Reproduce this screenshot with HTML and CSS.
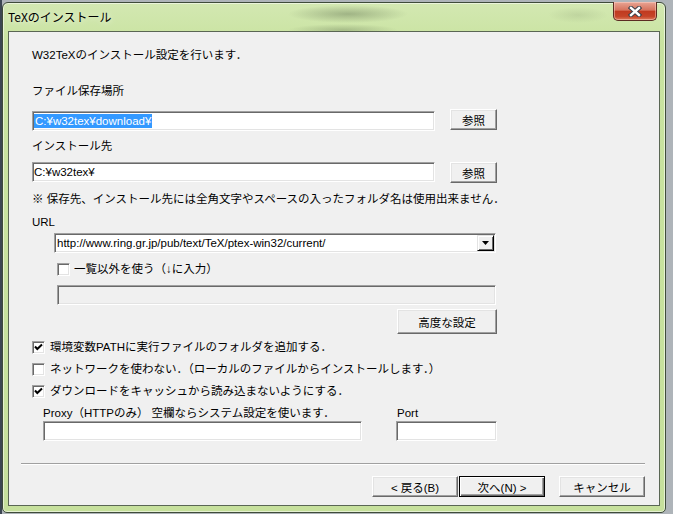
FILE: index.html
```html
<!DOCTYPE html>
<html lang="ja">
<head>
  <meta charset="UTF-8">
  <title>TeXのインストール</title>
  <link rel="stylesheet" href="styles.css">
</head>
<body>
  <div class="window">
    <div class="titlebar">
      <span class="title">TeXのインストール</span>
      <div class="close-btn">
        <svg width="14" height="11" viewBox="0 0 14 11">
          <path d="M3 2 L11 9 M11 2 L3 9" stroke="#3a3f48" stroke-width="4.4" stroke-linecap="square" fill="none"/>
          <path d="M3 2 L11 9 M11 2 L3 9" stroke="#fff" stroke-width="2.4" stroke-linecap="square" fill="none"/>
        </svg>
      </div>
    </div>

    <div class="client">
      <p class="intro">W32TeXのインストール設定を行います．</p>

      <p class="label lbl-save">ファイル保存場所</p>
      <div class="path-row row-save">
        <div class="edit path-edit"><span class="sel">C:¥w32tex¥download¥</span></div>
        <button class="btn browse-btn">参照</button>
      </div>

      <p class="label lbl-install">インストール先</p>
      <div class="path-row row-install">
        <div class="edit path-edit">C:¥w32tex¥</div>
        <button class="btn browse-btn">参照</button>
      </div>

      <p class="note">※ 保存先、インストール先には全角文字やスペースの入ったフォルダ名は使用出来ません．</p>

      <p class="label lbl-url">URL</p>
      <div class="combo">
        <span class="combo-text">http://www.ring.gr.jp/pub/text/TeX/ptex-win32/current/</span>
        <span class="combo-btn">
          <svg width="7" height="4" viewBox="0 0 7 4"><polygon points="0,0 7,0 3.5,4" fill="#000"/></svg>
        </span>
      </div>

      <label class="check check-custom"><span class="box"></span>一覧以外を使う（↓に入力）</label>
      <div class="edit disabled custom-url"></div>

      <div class="adv-row"><button class="btn adv-btn">高度な設定</button></div>

      <div class="options">
        <label class="check">
          <span class="box"><svg width="11" height="11" viewBox="0 0 11 11"><polyline points="2,4.5 4.3,7 9,2.5" stroke="#000" stroke-width="2" fill="none"/></svg></span>環境変数PATHに実行ファイルのフォルダを追加する．
        </label>
        <label class="check">
          <span class="box"></span>ネットワークを使わない．（ローカルのファイルからインストールします．）
        </label>
        <label class="check">
          <span class="box"><svg width="11" height="11" viewBox="0 0 11 11"><polyline points="2,4.5 4.3,7 9,2.5" stroke="#000" stroke-width="2" fill="none"/></svg></span>ダウンロードをキャッシュから読み込まないようにする．
        </label>
      </div>

      <div class="proxy-row">
        <div class="field proxy-field">
          <p class="label">Proxy（HTTPのみ） 空欄ならシステム設定を使います．</p>
          <div class="edit"></div>
        </div>
        <div class="field port-field">
          <p class="label">Port</p>
          <div class="edit"></div>
        </div>
      </div>

      <hr class="separator">

      <div class="wizard-buttons">
        <button class="btn wiz-btn back-btn">&lt; 戻る(B)</button>
        <button class="btn wiz-btn next-btn default">次へ(N) &gt;</button>
        <button class="btn wiz-btn">キャンセル</button>
      </div>
    </div>
  </div>
</body>
</html>
```

FILE: styles.css
```css
:root {
  --face: #f0f0f0;
  --shadow: #a0a0a0;
  --dark-shadow: #696969;
  --light: #e3e3e3;
  --frame: #c9e3a0;
}

* {
  box-sizing: border-box;
}

body {
  margin: 0;
  width: 673px;
  height: 514px;
  overflow: hidden;
  background: linear-gradient(to right, #3c4652 0 2px, #aeb4b9 2px);
  font-family: "Liberation Sans", "Noto Sans CJK JP", sans-serif;
  font-size: 11.5px;
  color: #000;
}

p {
  margin: 0;
}

/* ウィンドウ枠 */
.window {
  margin: 2px 0 0 2px;
  width: 664px;
  height: 511px;
  display: flex;
  flex-direction: column;
  padding: 0 5px 6px 5px;
  border: 1px solid #3f4c3a;
  border-radius: 6px 6px 5px 5px;
  background:
    radial-gradient(ellipse 60px 9px at 345px 11px, rgba(70, 85, 60, 0.35), transparent),
    radial-gradient(ellipse 55px 6px at 340px 27px, rgba(70, 85, 60, 0.28), transparent),
    radial-gradient(ellipse 30px 8px at 575px 12px, rgba(70, 85, 60, 0.12), transparent),
    linear-gradient(180deg, #d3e8b2 0, #c9e3a0 40px, #c6e09c 100%);
  box-shadow: inset 0 0 0 1px rgba(255, 255, 255, 0.55);
}

.titlebar {
  height: 28px;
  display: flex;
  justify-content: space-between;
  align-items: flex-start;
}

.title {
  padding-top: 6px;
  font-family: "Noto Sans CJK JP", sans-serif;
  font-size: 12px;
  line-height: 16px;
  text-shadow: 0 0 6px rgba(255, 255, 255, 0.9);
}

.close-btn {
  width: 44px;
  height: 19px;
  margin: -1px 3px 0 0;
  display: flex;
  align-items: center;
  justify-content: center;
  border: 1px solid #5b2b22;
  border-top: none;
  border-radius: 0 0 5px 5px;
  background: linear-gradient(180deg, #e8a594 0%, #d6735d 45%, #c03a20 52%, #c54428 80%, #de7a5a 100%);
  box-shadow: inset 0 0 0 1px rgba(255, 220, 210, 0.45);
}

/* クライアント領域 */
.client {
  height: 475px;
  display: flex;
  flex-direction: column;
  align-items: flex-start;
  padding-left: 23px;
  background: var(--face);
  border: 1px solid #5a6654;
}

.intro,
.label,
.note {
  line-height: 16px;
  white-space: nowrap;
}

.intro {
  margin-top: 15px;
}

.lbl-save {
  margin-top: 20px;
}

.lbl-install {
  margin-top: 7px;
}

.note {
  margin-top: 8px;
}

.lbl-url {
  margin-top: 7px;
}

/* 入力欄 */
.edit {
  height: 20px;
  padding: 1px 0 0 2px;
  line-height: 16px;
  white-space: nowrap;
  overflow: hidden;
  background: #fff;
  border: 1px solid;
  border-color: var(--shadow) #fff #fff var(--shadow);
  box-shadow: inset 1px 1px 0 var(--dark-shadow), inset -1px -1px 0 var(--light);
}

.edit.disabled {
  background: var(--face);
}

.path-row {
  display: flex;
  align-items: flex-start;
}

.row-save {
  margin-top: 10px;
  height: 22px;
}

.row-save .path-edit {
  margin-top: 2px;
}

.row-install {
  margin-top: 8px;
}

.path-edit {
  width: 403px;
  padding-left: 1px;
}

.sel {
  display: inline-block;
  padding: 0 1px;
  line-height: 14px;
  background: #3399ff;
  color: #fff;
}

/* ボタン */
.btn {
  font: inherit;
  color: #000;
  padding: 0;
  background: var(--face);
  border: 1px solid;
  border-color: #fff var(--dark-shadow) var(--dark-shadow) #fff;
  box-shadow: inset -1px -1px 0 var(--shadow), inset 1px 1px 0 var(--light);
}

.btn.default {
  border-color: #000;
  box-shadow: inset 1px 1px 0 #fff, inset -1px -1px 0 var(--dark-shadow), inset -2px -2px 0 var(--shadow);
}

.browse-btn {
  width: 47px;
  height: 21px;
  margin-left: 15px;
}

/* コンボボックス */
.combo {
  margin: 3px 0 0 22px;
  width: 442px;
  height: 20px;
  display: flex;
  align-items: center;
  padding: 1px 1px 1px 2px;
  background: #fff;
  border: 1px solid;
  border-color: var(--shadow) #fff #fff var(--shadow);
  box-shadow: inset 1px 1px 0 var(--dark-shadow), inset -1px -1px 0 var(--light);
}

.combo-text {
  flex: 1;
  line-height: 16px;
  white-space: nowrap;
  overflow: hidden;
}

.combo-btn {
  width: 17px;
  height: 16px;
  display: flex;
  align-items: center;
  justify-content: center;
  background: var(--face);
  border: 1px solid;
  border-color: var(--light) #000 #000 var(--light);
  box-shadow: inset 1px 1px 0 #fff, inset -1px -1px 0 var(--dark-shadow);
}

/* チェックボックス */
.check {
  display: flex;
  align-items: center;
  height: 16px;
  line-height: 16px;
  white-space: nowrap;
}

.box {
  flex: none;
  width: 13px;
  height: 13px;
  margin-right: 5px;
  display: flex;
  background: #fff;
  border: 1px solid;
  border-color: var(--shadow) #fff #fff var(--shadow);
  box-shadow: inset 1px 1px 0 var(--dark-shadow), inset -1px -1px 0 var(--light);
}

.check-custom {
  margin: 8px 0 0 25px;
}

.check-custom .box {
  margin-right: 4px;
}

.custom-url {
  margin: 8px 0 0 25px;
  width: 439px;
}

.adv-row {
  margin-top: 4px;
  width: 465px;
  display: flex;
  justify-content: flex-end;
}

.adv-btn {
  width: 100px;
  height: 25px;
}

.options {
  margin-top: 5px;
  display: flex;
  flex-direction: column;
  gap: 6px;
}

/* プロキシ */
.proxy-row {
  margin: 6px 0 0 11px;
  display: flex;
  gap: 34px;
}

.proxy-field {
  width: 319px;
}

.port-field {
  width: 101px;
}

.port-field .label {
  padding-left: 1px;
}

.separator {
  margin: 22px 0 0 -11px;
  width: 624px;
  height: 2px;
  border: 0;
  border-top: 1px solid var(--shadow);
  border-bottom: 1px solid #fff;
}

.wizard-buttons {
  margin: 11px 0 0 -11px;
  width: 624px;
  display: flex;
  justify-content: flex-end;
}

.wiz-btn {
  width: 86px;
  height: 21px;
}

.back-btn {
  margin-right: 1px;
}

.next-btn {
  margin-right: 14px;
}
```
